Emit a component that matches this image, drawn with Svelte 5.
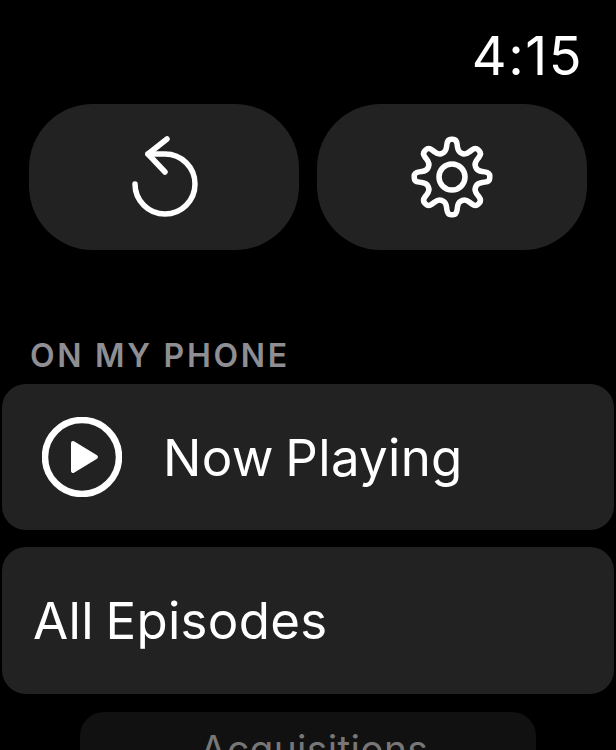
<script>
  // 8-tooth gear outline with rounded corners, centred on 50,50
  function gearPath(teeth, outer, inner) {
    const pts = [];
    const step = (Math.PI * 2) / teeth;
    for (let i = 0; i < teeth; i++) {
      const a = i * step - Math.PI / 2;
      const at = (r, d) => [
        50 + r * Math.cos(a + d * step),
        50 + r * Math.sin(a + d * step)
      ];
      pts.push(at(inner, -0.3), at(outer, -0.15), at(outer, 0.15), at(inner, 0.3));
    }
    const lerp = (p, q, t) => [p[0] + (q[0] - p[0]) * t, p[1] + (q[1] - p[1]) * t];
    const fmt = (p) => p[0].toFixed(2) + ' ' + p[1].toFixed(2);
    let d = '';
    pts.forEach((p, i) => {
      const prev = pts[(i + pts.length - 1) % pts.length];
      const next = pts[(i + 1) % pts.length];
      d += (i === 0 ? 'M' : 'L') + fmt(lerp(p, prev, 0.4)) + 'Q' + fmt(p) + ' ' + fmt(lerp(p, next, 0.4));
    });
    return d + 'Z';
  }

  const gear = gearPath(8, 38, 26);
</script>

<div class="screen">
  <div class="time">4:15</div>

  <div class="actions">
    <button class="action" aria-label="Restart">
      <svg class="restart" viewBox="0 0 70 82" aria-hidden="true">
        <path d="M6 48a30 30 0 1 0 30-30H19" />
        <path d="M38 3 19 18 36 36" />
      </svg>
    </button>
    <button class="action" aria-label="Settings">
      <svg class="gear" viewBox="0 0 100 100" aria-hidden="true">
        <path d={gear} />
        <circle cx="50" cy="50" r="13" />
      </svg>
    </button>
  </div>

  <h2>ON MY PHONE</h2>

  <div class="list">
    <div class="row">
      <svg class="play" viewBox="0 0 80 80" aria-hidden="true">
        <circle cx="40" cy="40" r="37" />
        <path d="M29 26v28a2 2 0 0 0 3 1.700l23-14a2 2 0 0 0 0-3.400l-23-14a2 2 0 0 0-3 1.700z" />
      </svg>
      <span>Now Playing</span>
    </div>
    <div class="row plain">
      <span>All Episodes</span>
    </div>
    <div class="row sub">
      <span>Acquisitions</span>
    </div>
  </div>
</div>

<style>
  :global(body) {
    background: #000;
  }

  .screen {
    width: 616px;
    height: 750px;
    overflow: hidden;
    background: #000;
    color: #fff;
    font-family: Inter, "Liberation Sans", sans-serif;
    padding: 26px 2px 0;
    box-sizing: border-box;
  }

  .time {
    font-size: 54px;
    line-height: 60px;
    text-align: right;
    padding-right: 31px;
    letter-spacing: 1.5px;
  }

  .actions {
    display: flex;
    gap: 18px;
    margin: 18px 27px 0;
  }

  .action {
    flex: 1;
    height: 146px;
    border: none;
    padding: 0;
    background: #222;
    border-radius: 64px;
    display: flex;
    align-items: center;
    justify-content: center;
  }

  .restart {
    width: 70px;
    height: 82px;
    fill: none;
    stroke: #fff;
    stroke-width: 5.5;
    stroke-linecap: round;
    stroke-linejoin: round;
  }

  .gear {
    width: 100px;
    height: 100px;
    fill: none;
    stroke: #fff;
    stroke-width: 5.5;
    stroke-linejoin: round;
  }

  h2 {
    margin: 86px 0 0 28px;
    font-size: 32px;
    line-height: 40px;
    font-weight: 600;
    letter-spacing: 2.7px;
    color: #8e8e93;
  }

  .list {
    display: flex;
    flex-direction: column;
    gap: 17px;
    margin-top: 8px;
  }

  .row {
    height: 146px;
    background: #222;
    border-radius: 24px;
    display: flex;
    align-items: center;
    gap: 41px;
    padding-left: 40px;
    font-size: 51px;
    letter-spacing: 0.3px;
    word-spacing: -3px;
  }

  .row.plain {
    height: 147px;
    padding-left: 31px;
  }

  .row.sub {
    margin: 1px 78px 0;
    padding: 14px 0 0 12px;
    justify-content: center;
    align-items: flex-start;
    background: #111;
    color: #777;
    font-size: 39px;
  }

  .play {
    width: 80px;
    height: 80px;
  }

  .play circle {
    fill: none;
    stroke: #fff;
    stroke-width: 6.5;
  }

  .play path {
    fill: #fff;
  }
</style>
